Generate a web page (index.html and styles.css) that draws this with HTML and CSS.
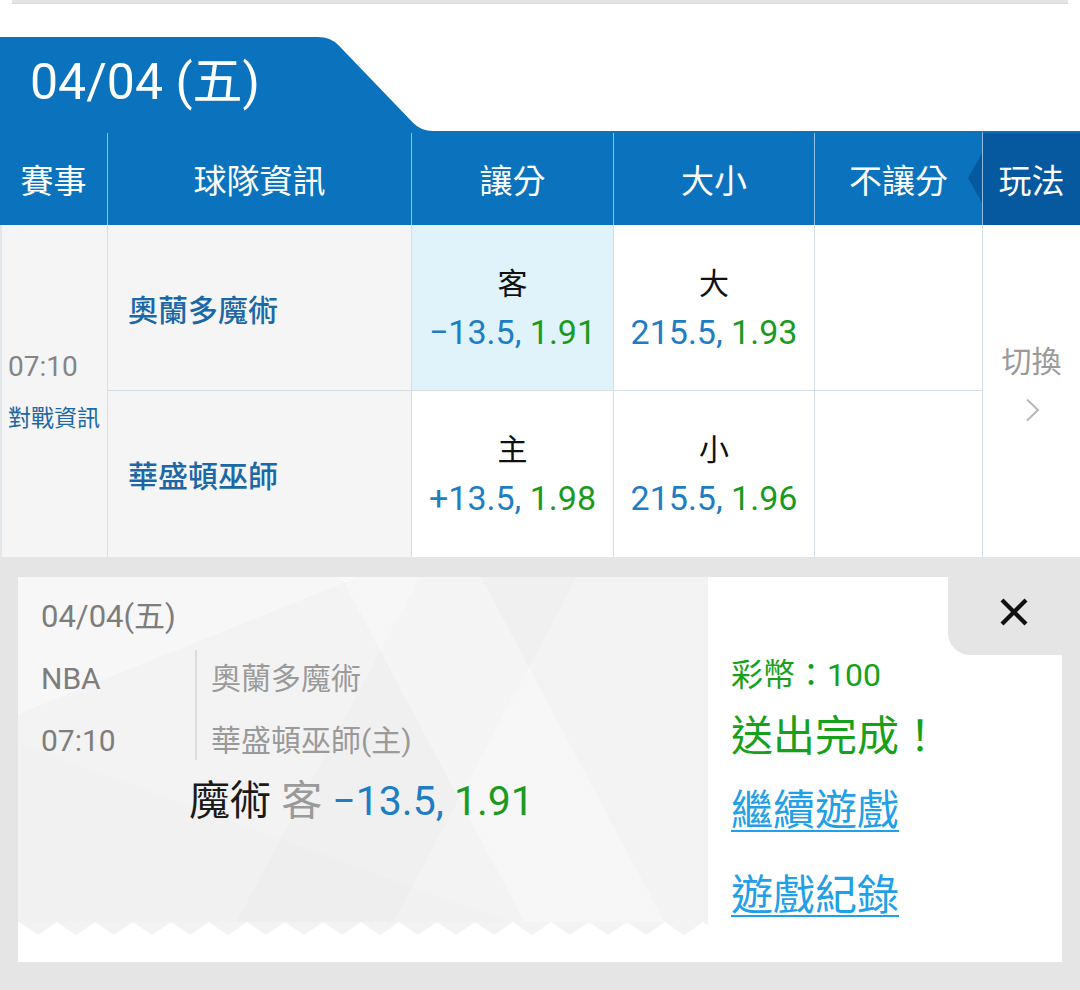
FILE: index.html
```html
<!DOCTYPE html>
<html lang="zh-Hant">
<head>
<meta charset="utf-8">
<title>04/04 (五)</title>
<link rel="stylesheet" href="styles.css">
</head>
<body>
<div class="topbar"></div>

<div class="tabrow">
  <div class="tab">04/04 (五)</div>
  <svg class="tab-slant" width="124" height="94" viewBox="0 0 124 94"><path d="M0,0 H8 Q20.5,0 28.5,8.3 L103,85.7 Q111,94 123,94 H0 Z" fill="#0b73bd"/></svg>
</div>

<div class="thead">
  <div class="th">賽事</div>
  <div class="th">球隊資訊</div>
  <div class="th">讓分</div>
  <div class="th">大小</div>
  <div class="th">不讓分</div>
  <div class="th th-play">玩法</div>
</div>

<div class="tbody">
  <div class="c-time">
    <div class="time">07:10</div>
    <div class="vs">對戰資訊</div>
  </div>
  <div class="c-switch">
    <div class="sw-text">切換</div>
    <svg class="chev" width="16" height="24" viewBox="0 0 16 24"><path d="M2,1.5 L13,12 L2,22.5" fill="none" stroke="#b8b8b8" stroke-width="2"/></svg>
  </div>

  <div class="c-team r1">奧蘭多魔術</div>
  <div class="c-odd r1 sel">
    <div class="side">客</div>
    <div class="num"><span class="b">−13.5,</span> <span class="g">1.91</span></div>
  </div>
  <div class="c-odd r1">
    <div class="side">大</div>
    <div class="num"><span class="b">215.5,</span> <span class="g">1.93</span></div>
  </div>
  <div class="c-empty r1"></div>

  <div class="c-team">華盛頓巫師</div>
  <div class="c-odd">
    <div class="side">主</div>
    <div class="num"><span class="b">+13.5,</span> <span class="g">1.98</span></div>
  </div>
  <div class="c-odd">
    <div class="side">小</div>
    <div class="num"><span class="b">215.5,</span> <span class="g">1.96</span></div>
  </div>
  <div class="c-empty"></div>
</div>

<div class="result">
  <div class="card">
    <div class="ticket">
      <div class="t-body">
        <div class="t-date">04/04(五)</div>
        <div class="t-info">
          <div class="t-meta">
            <div>NBA</div>
            <div>07:10</div>
          </div>
          <div class="t-teams">
            <div>奧蘭多魔術</div>
            <div>華盛頓巫師(主)</div>
          </div>
        </div>
        <div class="t-pick"><span class="pk-team">魔術</span> <span class="pk-side">客</span> <span class="b">−13.5,</span> <span class="g">1.91</span></div>
      </div>
      <svg class="zig" width="690" height="13" viewBox="0 0 690 13">
        <defs>
          <pattern id="zz" patternUnits="userSpaceOnUse" x="-18" y="0" width="38" height="13">
            <rect width="38" height="13" fill="#f3f3f3"/>
            <polygon points="0,13 19,0 38,13" fill="#ffffff"/>
          </pattern>
        </defs>
        <rect width="690" height="13" fill="url(#zz)"/>
      </svg>
      <div class="t-foot"></div>
    </div>
    <div class="panel">
      <div class="close-tab">
        <svg width="30" height="30" viewBox="0 0 30 30"><path d="M3,3 L27,27 M27,3 L3,27" stroke="#111" stroke-width="4.2" fill="none"/></svg>
      </div>
      <div class="coins">彩幣：100</div>
      <div class="done">送出完成！</div>
      <a class="link link-first" href="#">繼續遊戲</a>
      <a class="link link-second" href="#">遊戲紀錄</a>
    </div>
  </div>
</div>
</body>
</html>
```

FILE: styles.css
```css
* { box-sizing: border-box; }

html, body {
  margin: 0;
  padding: 0;
  background: #ffffff;
}

body {
  width: 1080px;
  height: 990px;
  overflow: hidden;
  font-family: Roboto, "Noto Sans CJK TC", sans-serif;
  color: #111;
}

.topbar {
  height: 4px;
  margin: 0 12px;
  background: #e4e4e4;
  border-bottom: 1px solid #dadada;
}

.tabrow {
  margin-top: 33px;
  height: 94px;
  display: flex;
}

.tab {
  width: 310px;
  height: 94px;
  background: #0b73bd;
  color: #ffffff;
  font-size: 50px;
  line-height: 90px;
  padding-left: 30px;
  white-space: nowrap;
}

.tab-slant { display: block; }

.thead {
  height: 94px;
  background: #0b73bd;
  display: grid;
  grid-template-columns: 107px 304px 202px 201px 168px 98px;
}

.th {
  color: #ffffff;
  font-size: 33px;
  display: flex;
  align-items: center;
  justify-content: center;
  border-left: 1px solid rgba(190, 220, 245, 0.75);
  margin-top: 2px;
  position: relative;
}

.th:first-child { border-left: none; }

.th-play {
  background: #06589f;
  margin-top: 0;
  border-top: 2px solid #0b73bd;
}

.th-play::before {
  content: "";
  position: absolute;
  left: -15px;
  top: 20px;
  border-right: 14px solid #06589f;
  border-top: 25px solid transparent;
  border-bottom: 25px solid transparent;
}

.tbody {
  display: grid;
  grid-template-columns: 107px 304px 202px 201px 168px 98px;
  grid-template-rows: 166px 166px;
  background: #ffffff;
}

.c-time {
  grid-column: 1;
  grid-row: 1 / span 2;
  background: #f5f5f5;
  border-left: 2px solid #e2e7ec;
  display: flex;
  flex-direction: column;
  justify-content: center;
  padding-left: 6px;
  padding-top: 4px;
}

.time {
  font-size: 28px;
  line-height: 52px;
  color: #858585;
}

.vs {
  font-size: 23px;
  line-height: 52px;
  color: #1c68a6;
}

.c-switch {
  grid-column: 6;
  grid-row: 1 / span 2;
  border-left: 1px solid #d6dee6;
  display: flex;
  flex-direction: column;
  align-items: center;
  justify-content: center;
  padding-bottom: 22px;
}

.sw-text {
  font-size: 30px;
  line-height: 48px;
  color: #9a9a9a;
}

.chev { display: block; margin-top: 12px; margin-left: 2px; }

.c-team {
  background: #f5f5f5;
  border-left: 1px solid #d6dee6;
  display: flex;
  align-items: center;
  padding-left: 20px;
  font-size: 30px;
  font-weight: 500;
  color: #1c68a6;
}

.c-odd {
  border-left: 1px solid #d6dee6;
  display: flex;
  flex-direction: column;
  align-items: center;
  justify-content: center;
  white-space: nowrap;
}

.c-empty {
  border-left: 1px solid #d6dee6;
}

.r1 { border-bottom: 1px solid #d6dee6; }

.sel { background: #e0f3fb; }

.side {
  font-size: 30px;
  line-height: 48px;
  color: #111;
}

.num {
  font-size: 34px;
  line-height: 48px;
}

.b { color: #1f7dc3; }
.g { color: #1b9a22; }

.result {
  background: #e5e5e5;
  padding: 20px 18px 28px;
}

.card {
  height: 385px;
  display: flex;
  background: #ffffff;
}

.ticket {
  width: 690px;
  display: flex;
  flex-direction: column;
}

.t-body {
  flex: 1;
  padding: 20px 0 0 23px;
  background:
    linear-gradient(158deg, rgba(255,255,255,0.35) 0 22%, transparent 22%),
    linear-gradient(62deg, transparent 0 58%, rgba(255,255,255,0.3) 58% 74%, transparent 74%),
    linear-gradient(118deg, transparent 0 46%, rgba(0,0,0,0.01) 46% 64%, transparent 64%),
    linear-gradient(20deg, rgba(0,0,0,0.008) 0 30%, transparent 30%),
    #f3f3f3;
}

.t-date {
  font-size: 31px;
  line-height: 40px;
  color: #7d7d7d;
}

.t-info {
  display: flex;
  align-items: flex-start;
  margin-top: 11px;
}

.t-meta {
  width: 154px;
  font-size: 30px;
  line-height: 62px;
  color: #7d7d7d;
}

.t-teams {
  height: 110px;
  margin-top: 2px;
  border-left: 2px solid #dcdcdc;
  padding-left: 14px;
  font-size: 30px;
  line-height: 62px;
  color: #9a9a9a;
}

.t-teams div { margin-top: -2px; }
.t-teams div + div { margin-top: 0; }

.t-pick {
  margin-top: 4px;
  margin-left: 148px;
  font-size: 41px;
  line-height: 50px;
  white-space: nowrap;
}

.pk-team { color: #1a1a1a; }
.pk-side { color: #9a9a9a; }

.zig { display: block; }

.t-foot {
  height: 27px;
  background: #ffffff;
}

.panel {
  flex: 1;
  background: #ffffff;
  display: flex;
  flex-direction: column;
  padding-left: 23px;
}

.close-tab {
  align-self: flex-end;
  width: 114px;
  height: 78px;
  background: #e5e5e5;
  border-bottom-left-radius: 22px;
  display: flex;
  align-items: center;
  justify-content: center;
  padding-left: 18px;
  padding-bottom: 8px;
}

.close-tab svg { display: block; }

.coins {
  font-size: 32px;
  line-height: 40px;
  color: #17a01a;
}

.done {
  font-size: 42px;
  line-height: 84px;
  color: #17a01a;
}

.link {
  display: block;
  font-size: 42px;
  line-height: 64px;
  color: #1fa0e8;
  text-decoration: underline;
  text-decoration-thickness: 2px;
  text-underline-offset: 5px;
  white-space: nowrap;
}

.link-second { margin-top: 21px; }
```
